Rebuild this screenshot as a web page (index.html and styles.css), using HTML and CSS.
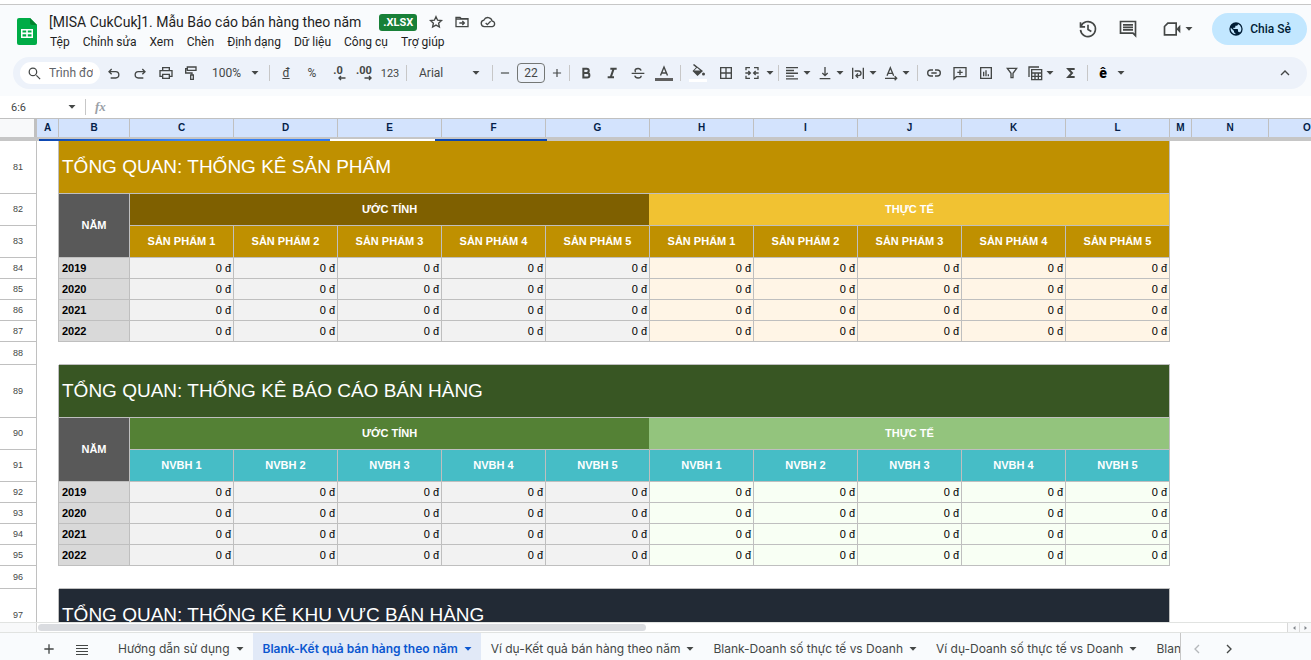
FILE: index.html
```html
<!DOCTYPE html>
<html lang="vi">
<head>
<meta charset="utf-8">
<title>[MISA CukCuk]1. Mẫu Báo cáo bán hàng theo năm</title>
<link rel="stylesheet" href="styles.css">
</head>
<body>
<svg class="defs" aria-hidden="true">
  <symbol id="caret" viewBox="0 0 10 10"><path d="M1.5 3h7L5 6.8z" fill="currentColor"/></symbol>
</svg>
<div class="app">
  <header class="header">
    <svg class="logo" viewBox="0 0 20 27"><path d="M2 0h11l7 7v18a2 2 0 0 1-2 2H2a2 2 0 0 1-2-2V2a2 2 0 0 1 2-2z" fill="#00ac47"/><path d="M13 0l7 7h-5a2 2 0 0 1-2-2z" fill="#00832d"/><path d="M4 11h12v9H4zM5.500 12.500v2h3.700v-2zm5.300 0v2h3.700v-2zM5.500 16.300v2.200h3.700v-2.200zm5.300 0v2.200h3.700v-2.200z" fill="#fff" fill-rule="evenodd"/></svg>
    <div class="doc">
      <div class="doc-title">
        <h1>[MISA CukCuk]1. Mẫu Báo cáo bán hàng theo năm</h1>
        <span class="badge">.XLSX</span>
        <button class="mini" aria-label="Gắn dấu sao"><svg viewBox="0 0 24 24"><path d="M12 4l2.400 5.300 5.800.6-4.300 3.900 1.200 5.700-5.100-2.900-5.100 2.900 1.200-5.700-4.300-3.900 5.800-.6z" class="line"/></svg></button>
        <button class="mini" aria-label="Di chuyển"><svg viewBox="0 0 24 24"><path d="M3 5h6l2 2h10v12H3zM3 7.500h18M8 13.500h7M12.500 10.500l3 3-3 3" class="line"/></svg></button>
        <button class="mini" aria-label="Trạng thái lưu"><svg viewBox="0 0 24 24"><path d="M6.500 19a5 5 0 0 1-.6-9.900 6.500 6.500 0 0 1 12.300 1.600A4.200 4.200 0 0 1 18.500 19zM8.500 13.500l2.500 2.500 5-5" class="line"/></svg></button>
      </div>
      <nav class="menus">
        <button>Tệp</button><button>Chỉnh sửa</button><button>Xem</button><button>Chèn</button><button>Định dạng</button><button>Dữ liệu</button><button>Công cụ</button><button>Trợ giúp</button>
      </nav>
    </div>
    <div class="actions">
      <button class="act" aria-label="Nhật ký"><svg viewBox="0 0 24 24"><path d="M3.500 9A9 9 0 1 1 3 13M3 4v5.500h5.500M12 7v5.500l4 2.500" class="line"/></svg></button>
      <button class="act" aria-label="Nhận xét"><svg viewBox="0 0 24 24"><path d="M3 3h18v17l-3-3H3zM6 7h12M6 10h12M6 13h12" class="line"/></svg></button>
      <button class="act meet" aria-label="Cuộc gọi"><svg viewBox="0 0 24 24"><path d="M7 5h10v14H3V9z" class="line"/><path d="M18 11l4-4v10l-4-4z" fill="currentColor"/></svg><svg class="caret"><use href="#caret"/></svg></button>
      <button class="share"><svg viewBox="0 0 24 24"><path d="M12 2a10 10 0 1 0 0 20 10 10 0 0 0 0-20zm-1 17.900A8 8 0 0 1 4.200 10.200L9 15v1a2 2 0 0 0 2 2zm6.900-2.500A2 2 0 0 0 16 16h-1v-3a1 1 0 0 0-1-1H8v-2h2a1 1 0 0 0 1-1V7h2a2 2 0 0 0 2-2v-.4a8 8 0 0 1 2.900 12.800z" fill="currentColor"/></svg>Chia Sẻ</button>
    </div>
  </header>

  <div class="toolbar" role="toolbar">
    <label class="search"><svg viewBox="0 0 24 24"><path d="M15 15l6 6" class="line"/><circle cx="9.500" cy="9.500" r="6" class="line"/></svg><input type="text" placeholder="Trình đơn" aria-label="Trình đơn"></label>
    <button aria-label="Hủy"><svg viewBox="0 0 24 24"><path d="M8.500 4L4.500 8l4 4M5 8h9.500a4.700 4.700 0 0 1 0 9.500H7" transform="translate(0 2)" class="line"/></svg></button>
    <button aria-label="Làm lại"><svg viewBox="0 0 24 24"><path d="M15.500 4l4 4-4 4M19 8H9.500a4.700 4.700 0 0 0 0 9.500H17" transform="translate(0 2)" class="line"/></svg></button>
    <button aria-label="In"><svg viewBox="0 0 24 24"><path d="M7 8V4h10v4M7 17H3V8.500h18V17h-4M7 14h10v6H7z" class="line"/></svg></button>
    <button aria-label="Sơn định dạng"><svg viewBox="0 0 24 24"><path d="M5 3h13v5H5zM5 5.500H2.500V12H12v3M10 15h4v6.500h-4z" class="line"/></svg></button>
    <label class="pick zoom"><select aria-label="Thu phóng"><option>100%</option></select><svg class="caret"><use href="#caret"/></svg></label>
    <i class="sep"></i>
    <button class="txt"><u>đ</u></button>
    <button class="txt">%</button>
    <button class="dec" aria-label="Giảm số thập phân"><span>.0</span><svg viewBox="0 0 8 6"><path d="M7.500 3H1M3 1L1 3l2 2" class="thin"/></svg></button>
    <button class="dec" aria-label="Tăng số thập phân"><span>.00</span><svg viewBox="0 0 8 6"><path d="M.5 3H7M5 1l2 2-2 2" class="thin"/></svg></button>
    <button class="txt small">123</button>
    <i class="sep"></i>
    <label class="pick font"><select aria-label="Phông chữ"><option>Arial</option></select><svg class="caret"><use href="#caret"/></svg></label>
    <i class="sep"></i>
    <button class="step" aria-label="Giảm cỡ chữ"><svg viewBox="0 0 24 24"><path d="M5 12h14" class="line"/></svg></button>
    <input class="size" type="text" value="22" aria-label="Cỡ chữ">
    <button class="step" aria-label="Tăng cỡ chữ"><svg viewBox="0 0 24 24"><path d="M5 12h14M12 5v14" class="line"/></svg></button>
    <i class="sep"></i>
    <button aria-label="Đậm"><svg viewBox="0 0 24 24"><path d="M8 5.500h5a3.200 3.200 0 0 1 0 6.400H8zM8 12h5.800a3.300 3.300 0 0 1 0 6.600H8z" class="heavy"/></svg></button>
    <button aria-label="Nghiêng"><svg viewBox="0 0 24 24"><path d="M9.500 5.500H19M5.500 18.500H15M14.500 5.500l-4.500 13" class="heavy"/></svg></button>
    <button aria-label="Gạch ngang"><svg viewBox="0 0 24 24"><path d="M2.500 12.500h19M16.500 8.500c-.4-2.300-2-3.300-4.400-3.300-2.600 0-4.500 1.300-4.500 3.300 0 .9.400 1.500 1 2M7.200 16c.5 2.400 2.300 3.500 4.900 3.500 2.800 0 4.700-1.300 4.700-3.400" class="line"/></svg></button>
    <button aria-label="Màu văn bản"><svg class="tall" viewBox="0 0 18 18"><path d="M5.500 11.500L9 3l3.500 8.500M6.700 9h4.600" class="thin"/><path d="M0 14h18v3H0z" fill="#5f5f5f"/></svg></button>
    <i class="sep"></i>
    <button class="mid" aria-label="Màu nền"><svg class="tall" viewBox="0 0 18 18"><path d="M5 0l9 7-5.500 5L3.500 7 7 3.500 4 1z" fill="currentColor"/><path d="M5.200 6.500L8 3.800l3.200 2.700z" fill="#edf2fa"/><circle cx="14.500" cy="10" r="1.500" fill="currentColor"/><path d="M0 15h18v3H0z" fill="#fff"/></svg></button>
    <button class="mid" aria-label="Đường viền"><svg viewBox="0 0 24 24"><path d="M4 4h16v16H4zM12 4v16M4 12h16" class="line"/></svg></button>
    <button class="drop wide" aria-label="Hợp nhất ô"><svg viewBox="0 0 24 24"><path d="M9 4H3v4M15 4h6v4M9 20H3v-4M15 20h6v-4M2 12h7M6.500 9L9.500 12l-3 3M22 12h-7M17.500 9l-3 3 3 3" class="line"/></svg><svg class="caret"><use href="#caret"/></svg></button>
    <i class="sep"></i>
    <button class="drop" aria-label="Căn ngang"><svg viewBox="0 0 24 24"><path d="M3 4h18M3 8.200h12M3 12.400h18M3 16.600h12M3 20.800h18" class="line"/></svg><svg class="caret"><use href="#caret"/></svg></button>
    <button class="drop" aria-label="Căn dọc"><svg viewBox="0 0 24 24"><path d="M4 20.500h16M12 3v13M8 12l4 4 4-4" class="line"/></svg><svg class="caret"><use href="#caret"/></svg></button>
    <button class="drop" aria-label="Xuống dòng"><svg viewBox="0 0 24 24"><path d="M4 4v17M20 4v17M7 9h6a3.200 3.200 0 0 1 0 7h-3M12 12.800L9 16l3 3" class="line"/></svg><svg class="caret"><use href="#caret"/></svg></button>
    <button class="drop" aria-label="Xoay văn bản"><svg viewBox="0 0 24 24"><path d="M6 16l5-12 5 12M8 12.500h6M3 20h17M17.500 17l3 3-3 3" class="line"/></svg><svg class="caret"><use href="#caret"/></svg></button>
    <i class="sep"></i>
    <button aria-label="Chèn liên kết"><svg viewBox="0 0 24 24"><path d="M10.500 7.500H7a4.500 4.500 0 0 0 0 9h3.500M13.500 7.500H17a4.500 4.500 0 0 1 0 9h-3.500M8 12h8" class="line"/></svg></button>
    <button aria-label="Chèn nhận xét"><svg viewBox="0 0 24 24"><path d="M21 4H3v17l3.500-3.500H21zM12 7v8M8 11h8" class="line"/></svg></button>
    <button aria-label="Chèn biểu đồ"><svg viewBox="0 0 24 24"><path d="M4 4h16v16H4zM8.500 10v7M12 8v9M15.500 14v3" class="line"/></svg></button>
    <button aria-label="Bộ lọc"><svg viewBox="0 0 24 24"><path d="M5 5h14l-5.500 7.500V19h-3v-6.500z" class="line"/></svg></button>
    <button class="drop" aria-label="Chế độ xem bảng"><svg viewBox="0 0 24 24"><path d="M3 18V3h15M7 7h15v15H7zM7 12h15M7 17h15M12 12v10M17 12v10" class="line"/></svg><svg class="caret"><use href="#caret"/></svg></button>
    <button aria-label="Hàm"><svg viewBox="0 0 24 24"><path d="M17.500 6H8l5.500 6L8 18h9.500" class="heavy"/></svg></button>
    <i class="sep"></i>
    <button class="drop wide ime" aria-label="Công cụ nhập liệu"><span>ê</span><svg class="caret"><use href="#caret"/></svg></button>
    <button class="fold" aria-label="Ẩn trình đơn"><svg viewBox="0 0 24 24"><path d="M6 15l6-6 6 6" class="line"/></svg></button>
  </div>

  <div class="formula">
    <input class="namebox" type="text" value="6:6" aria-label="Hộp tên"><svg class="caret"><use href="#caret"/></svg>
    <i class="sep"></i>
    <label class="fx" for="fx">fx</label><input id="fx" class="fxin" type="text">
  </div>

  <main class="grid">
    <table>
      <colgroup><col class="w-head"><col class="w-thin"><col class="w-year"><col span="10" class="w-data"><col class="w-thin"><col span="2" class="w-side"></colgroup>
      <thead>
        <tr class="cols"><th class="corner"></th><th>A</th><th>B</th><th>C</th><th>D</th><th>E</th><th>F</th><th>G</th><th>H</th><th>I</th><th>J</th><th>K</th><th>L</th><th>M</th><th>N</th><th>O</th></tr>
        <tr class="freeze"><td colspan="16"><div class="frozen"><i class="strip-a"></i><i class="strip-gap"></i><i class="strip-b"></i></div></td></tr>
      </thead>
      <tbody class="product">
        <tr class="r-title"><th>81</th><td></td><td colspan="11" class="title">TỔNG QUAN: THỐNG KÊ SẢN PHẨM</td></tr>
        <tr class="r-mid"><th>82</th><td></td><td rowspan="2" class="year-head">NĂM</td><td colspan="5" class="est">ƯỚC TÍNH</td><td colspan="5" class="act-head">THỰC TẾ</td></tr>
        <tr class="r-mid names"><th>83</th><td></td><td>SẢN PHẨM 1</td><td>SẢN PHẨM 2</td><td>SẢN PHẨM 3</td><td>SẢN PHẨM 4</td><td>SẢN PHẨM 5</td><td>SẢN PHẨM 1</td><td>SẢN PHẨM 2</td><td>SẢN PHẨM 3</td><td>SẢN PHẨM 4</td><td>SẢN PHẨM 5</td></tr>
        <tr class="r-data"><th>84</th><td></td><td>2019</td><td>0 đ</td><td>0 đ</td><td>0 đ</td><td>0 đ</td><td>0 đ</td><td>0 đ</td><td>0 đ</td><td>0 đ</td><td>0 đ</td><td>0 đ</td></tr>
        <tr class="r-data"><th>85</th><td></td><td>2020</td><td>0 đ</td><td>0 đ</td><td>0 đ</td><td>0 đ</td><td>0 đ</td><td>0 đ</td><td>0 đ</td><td>0 đ</td><td>0 đ</td><td>0 đ</td></tr>
        <tr class="r-data"><th>86</th><td></td><td>2021</td><td>0 đ</td><td>0 đ</td><td>0 đ</td><td>0 đ</td><td>0 đ</td><td>0 đ</td><td>0 đ</td><td>0 đ</td><td>0 đ</td><td>0 đ</td></tr>
        <tr class="r-data"><th>87</th><td></td><td>2022</td><td>0 đ</td><td>0 đ</td><td>0 đ</td><td>0 đ</td><td>0 đ</td><td>0 đ</td><td>0 đ</td><td>0 đ</td><td>0 đ</td><td>0 đ</td></tr>
        <tr class="r-gap"><th>88</th><td></td><td colspan="11" class="blank"></td></tr>
      </tbody>
      <tbody class="staff">
        <tr class="r-title"><th>89</th><td></td><td colspan="11" class="title">TỔNG QUAN: THỐNG KÊ BÁO CÁO BÁN HÀNG</td></tr>
        <tr class="r-mid"><th>90</th><td></td><td rowspan="2" class="year-head">NĂM</td><td colspan="5" class="est">ƯỚC TÍNH</td><td colspan="5" class="act-head">THỰC TẾ</td></tr>
        <tr class="r-mid names"><th>91</th><td></td><td>NVBH 1</td><td>NVBH 2</td><td>NVBH 3</td><td>NVBH 4</td><td>NVBH 5</td><td>NVBH 1</td><td>NVBH 2</td><td>NVBH 3</td><td>NVBH 4</td><td>NVBH 5</td></tr>
        <tr class="r-data"><th>92</th><td></td><td>2019</td><td>0 đ</td><td>0 đ</td><td>0 đ</td><td>0 đ</td><td>0 đ</td><td>0 đ</td><td>0 đ</td><td>0 đ</td><td>0 đ</td><td>0 đ</td></tr>
        <tr class="r-data"><th>93</th><td></td><td>2020</td><td>0 đ</td><td>0 đ</td><td>0 đ</td><td>0 đ</td><td>0 đ</td><td>0 đ</td><td>0 đ</td><td>0 đ</td><td>0 đ</td><td>0 đ</td></tr>
        <tr class="r-data"><th>94</th><td></td><td>2021</td><td>0 đ</td><td>0 đ</td><td>0 đ</td><td>0 đ</td><td>0 đ</td><td>0 đ</td><td>0 đ</td><td>0 đ</td><td>0 đ</td><td>0 đ</td></tr>
        <tr class="r-data"><th>95</th><td></td><td>2022</td><td>0 đ</td><td>0 đ</td><td>0 đ</td><td>0 đ</td><td>0 đ</td><td>0 đ</td><td>0 đ</td><td>0 đ</td><td>0 đ</td><td>0 đ</td></tr>
        <tr class="r-gap"><th>96</th><td></td><td colspan="11" class="blank"></td></tr>
      </tbody>
      <tbody class="region">
        <tr class="r-title"><th>97</th><td></td><td colspan="11" class="title">TỔNG QUAN: THỐNG KÊ KHU VỰC BÁN HÀNG</td></tr>
      </tbody>
    </table>
  </main>

  <div class="hscroll">
    <div class="hscroll-corner"></div>
    <div class="track"><div class="thumb"></div></div>
    <button aria-label="Cuộn trái"><svg viewBox="0 0 6 6"><path d="M4.500 1v4L2 3z" fill="currentColor"/></svg></button>
    <button aria-label="Cuộn phải"><svg viewBox="0 0 6 6"><path d="M1.500 1v4L4 3z" fill="currentColor"/></svg></button>
  </div>

  <footer class="tabs">
    <button class="tool" aria-label="Thêm trang tính"><svg viewBox="0 0 24 24"><path d="M5 12h14M12 5v14" class="line"/></svg></button>
    <button class="tool" aria-label="Tất cả trang tính"><svg viewBox="0 0 16 16"><path d="M2 4.500h12M2 7.500h12M2 10.500h12M2 13.500h12" fill="none" stroke="currentColor"/></svg></button>
    <div class="tablist">
      <button>Hướng dẫn sử dụng<svg class="caret"><use href="#caret"/></svg></button>
      <button class="on">Blank-Kết quả bán hàng theo năm<svg class="caret"><use href="#caret"/></svg></button>
      <button>Ví dụ-Kết quả bán hàng theo năm<svg class="caret"><use href="#caret"/></svg></button>
      <button>Blank-Doanh số thực tế vs Doanh<svg class="caret"><use href="#caret"/></svg></button>
      <button>Ví dụ-Doanh số thực tế vs Doanh<svg class="caret"><use href="#caret"/></svg></button>
      <button>Blank</button>
    </div>
    <button class="nav off" aria-label="Trước"><svg viewBox="0 0 24 24"><path d="M15 6l-6 6 6 6" class="line"/></svg></button>
    <button class="nav" aria-label="Sau"><svg viewBox="0 0 24 24"><path d="M9 6l6 6-6 6" class="line"/></svg></button>
  </footer>
</div>
</body>
</html>
```

FILE: styles.css
```css
* { box-sizing: border-box; }
body { margin: 0; font-family: Roboto, "Noto Sans", sans-serif; color: #444746; background: #fff; }
button, input, select { font: inherit; color: inherit; border: 0; background: none; padding: 0; margin: 0; outline: 0; }
button { display: flex; align-items: center; justify-content: center; flex: none; white-space: nowrap; }
.defs { display: none; }
svg { display: block; flex: none; width: 16px; height: 16px; }
svg.caret { width: 10px; height: 10px; }
.line { fill: none; stroke: currentColor; stroke-width: 2; }
.heavy { fill: none; stroke: currentColor; stroke-width: 3; }
.thin { fill: none; stroke: currentColor; stroke-width: 1.4; }

.app { height: 100vh; display: flex; flex-direction: column; overflow: hidden; background: #f9fbfd; border-top: 4px solid #fff; }

.header { display: flex; flex: none; height: 53px; border-top: 1px solid #c7c7c7; padding: 7px 4px 0 17px; }
.logo { width: 20px; height: 27px; margin-top: 6px; }
.doc { margin-left: 12px; flex: 1; min-width: 0; }
.doc-title { display: flex; align-items: center; height: 20px; }
h1 { margin: 0 18px 0 0; font-size: 14px; line-height: 20px; font-weight: 400; color: #1f1f1f; white-space: nowrap; }
.badge { height: 17px; padding: 0 4px; border-radius: 3px; background: #188038; color: #fff; font-size: 11px; line-height: 17px; font-weight: 700; margin-right: 6px; }
.mini { width: 26px; height: 20px; }
.menus { display: flex; gap: 13px; padding-left: 1px; }
.menus button { height: 20px; font-size: 12px; color: #1f1f1f; }
.actions { display: flex; align-items: center; height: 34px; }
.act { width: 40px; height: 32px; }
.act svg:first-child { width: 20px; height: 20px; }
.meet { width: 46px; gap: 2px; margin: 0 11px 0 7px; }
.share { width: 95px; height: 32px; border-radius: 16px; background: #c2e7ff; color: #001d35; font-size: 12px; font-weight: 500; gap: 6px; }

.toolbar { flex: none; display: flex; align-items: center; height: 32px; margin: 0 4px 0 13px; padding: 0 9px 0 7px; border-radius: 16px; background: #edf2fa; }
.toolbar > button { width: 26px; height: 24px; }
.search { display: flex; align-items: center; width: 80px; height: 22px; margin-right: 1px; padding: 0 7px; border-radius: 11px; background: #fff; }
.search svg { width: 15px; height: 15px; }
.search input { flex: 1; min-width: 0; margin-left: 7px; font-size: 12px; }
.search input::placeholder { color: #5f6368; opacity: 1; }
.sep { flex: none; width: 1px; height: 16px; margin: 0 3px; background: #c7c7c7; }
.pick { display: flex; align-items: center; font-size: 12px; }
.pick select { appearance: none; flex: 1; min-width: 0; }
.zoom { width: 61px; padding: 0 6px 0 7px; }
.font { width: 79px; padding: 0 8px 0 9px; }
.toolbar .txt { font-size: 12px; }
.toolbar .small { font-size: 11px; }
.toolbar .dec { flex-direction: column; font-size: 11px; font-weight: 700; line-height: 9px; }
.dec svg { width: 8px; height: 6px; margin-left: 8px; }
.toolbar .step { width: 18px; }
.step svg { width: 14px; height: 14px; }
.size { width: 28px; height: 20px; margin: 0 3px; border: 1px solid #747775; border-radius: 4px; text-align: center; font-size: 12px; }
.tall { width: 18px; height: 18px; }
.toolbar .mid { width: 28px; }
.toolbar .drop { width: 33px; justify-content: flex-start; padding-left: 2px; gap: 2px; }
.toolbar .wide { width: 35px; padding-left: 4px; gap: 5px; }
.ime span { width: 16px; font-size: 14px; font-weight: 900; color: #000; }
.toolbar .fold { margin-left: auto; }

.formula { flex: none; display: flex; align-items: center; height: 22px; margin-top: 7px; background: #fff; }
.namebox { width: 67px; padding-left: 11px; font-size: 11px; }
.formula .sep { margin: 0 9px 0 8px; }
.fx { font: italic 700 13px "Liberation Serif", serif; color: #9aa0a6; }
.fxin { flex: 1; }

.grid { flex: 1; min-height: 0; overflow: hidden; background: #fff; border-top: 1px solid #c0c0c0; }
table { table-layout: fixed; width: 1346px; border-collapse: separate; border-spacing: 0; font-family: "Liberation Sans", Arial, sans-serif; font-size: 11px; line-height: 13px; color: #000; }
.w-head { width: 37px; }
.w-thin { width: 22px; }
.w-year { width: 71px; }
.w-data { width: 104px; }
.w-side { width: 77px; }
th, td { padding: 0; }
.cols th { height: 18px; background: #d3e3fd; border-right: 1px solid #c0c0c0; font-size: 10px; line-height: 12px; color: #041e49; }
.cols .corner { background: #f8f9fa; border-right: 3px solid #c0c0c0; }
.freeze td { height: 4px; background: #c6c6c6; line-height: 0; }
.frozen { display: flex; height: 4px; padding: 2px 0 0 39px; }
.strip-a { width: 291px; background: linear-gradient(90deg, #0b46b0, #3f86f5 50%, #2f78ee); }
.strip-gap { width: 105px; background: #fff; }
.strip-b { width: 112px; background: #0b46b0; }
tbody th { border-right: 1px solid #c0c0c0; border-bottom: 1px solid #c0c0c0; font-size: 9px; line-height: 11px; font-weight: 400; color: #444746; }
tbody td { text-align: center; font-weight: 700; }
tbody td:nth-child(2) { border-right: 1px solid #bfbfbf; }
.r-gap td:nth-child(2) { border-right: 0; }
.r-title { height: 53px; }
.r-mid { height: 32px; }
.r-data { height: 21px; }
.r-gap { height: 23px; }
.blank { border-bottom: 1px solid #bfbfbf; }
.title { padding-left: 3px; font-size: 19px; line-height: 24px; color: #fff; border-right: 1px solid #bfbfbf; border-bottom: 1px solid #bfbfbf; }
tbody .title { text-align: left; font-weight: 400; }
.year-head { background: #595959; color: #fff; border-right: 1px solid #bfbfbf; border-bottom: 1px solid #bfbfbf; }
.est, .act-head { color: #fff; border-bottom: 1px solid #bfbfbf; }
.act-head { border-right: 1px solid #bfbfbf; }
.names td:nth-child(n+3) { color: #fff; border-right: 1px solid #bfbfbf; border-bottom: 1px solid #bfbfbf; }
.r-data td:nth-child(n+3) { border-right: 1px solid #bfbfbf; border-bottom: 1px solid #bfbfbf; background: #f2f2f2; text-align: right; padding-right: 2px; font-weight: 400; }
.r-data td:nth-child(3) { background: #d9d9d9; text-align: left; padding-left: 3px; font-weight: 700; }
.product .title, .product .names td:nth-child(n+3) { background: #bf9000; }
.product .est { background: #7f6000; border-right: 1px solid #f1c232; }
.product .act-head { background: #f1c232; }
.product .r-data td:nth-child(n+9) { background: #fff5e6; }
.staff .title { background: #385623; }
.staff .est { background: #548135; border-right: 1px solid #93c47d; }
.staff .act-head { background: #93c47d; }
.staff .names td:nth-child(n+3) { background: #46bdc6; }
.staff .r-data td:nth-child(n+9) { background: #f8fff4; }
.product .r-data td:nth-child(3), .staff .r-data td:nth-child(3) { background: #d9d9d9; text-align: left; font-weight: 700; }
.region .title { background: #222a35; }

.hscroll { flex: none; display: flex; height: 11px; border-top: 1px solid #e1e3e1; border-bottom: 1px solid #e1e3e1; background: #fff; }
.hscroll-corner { width: 37px; background: #f8f9fa; border-right: 1px solid #d5d5d5; }
.track { flex: 1; padding: 1px; }
.thumb { width: 48.7%; height: 7px; border-radius: 4px; background: #dadce0; }
.hscroll button { width: 12px; border-left: 1px solid #d9d9d9; background: #f8f9fa; color: #80868b; }
.hscroll button svg { width: 6px; height: 6px; }

.tabs { flex: none; display: flex; height: 27px; padding-left: 32px; font-family: Inter, "Noto Sans", sans-serif; font-size: 12px; }
.tool { width: 33px; padding-top: 4px; }
.tabs .tool:nth-child(2) { margin-right: 10px; }
.tablist { flex: 1; min-width: 0; display: flex; overflow: hidden; }
.tablist button { padding: 4px 8px 0 10px; gap: 5px; }
.tabs .tablist { border-right: 1px solid #c7c7c7; }
.tablist .on { background: #e1e9f7; color: #0b57d0; font-weight: 600; }
.nav { width: 32px; padding-top: 4px; }
.nav:last-child { margin-right: 66px; }
.off { color: #b5b8bb; }
```
